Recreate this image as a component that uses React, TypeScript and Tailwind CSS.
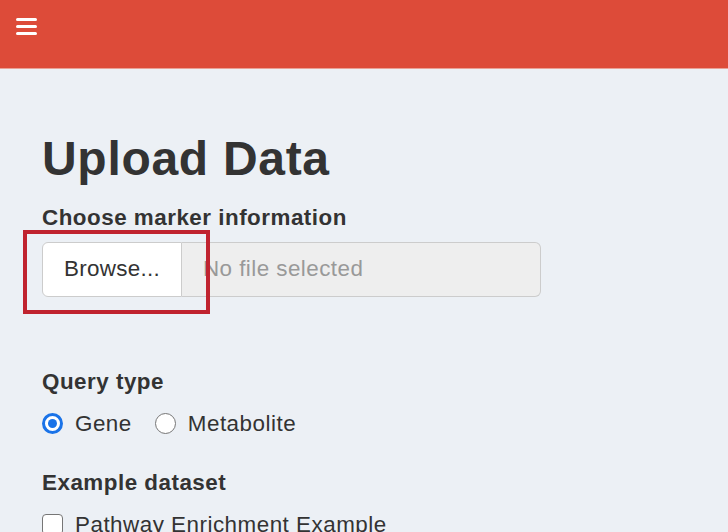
const sans = "font-['Liberation_Sans',Arial,sans-serif]";

function Radio({ checked, label }: { checked?: boolean; label: string }) {
  return (
    <label className="flex items-center gap-3">
      {checked ? (
        <span className="flex h-[21px] w-[21px] items-center justify-center rounded-full border-[3px] border-[#1a73e8] bg-white">
          <span className="h-[9px] w-[9px] rounded-full bg-[#1a73e8]" />
        </span>
      ) : (
        <span className="h-[21px] w-[21px] rounded-full border-[1.5px] border-[#767676] bg-white" />
      )}
      <span>{label}</span>
    </label>
  );
}

export default function App() {
  return (
    <div className={`min-h-[532px] bg-[#ecf0f5] text-[#333] ${sans}`}>
      <header className="flex h-[69px] items-start border-b border-[#e9a196] bg-[#dd4b39] pl-4 pt-[18px]">
        <div className="flex w-[21px] flex-col gap-1">
          <span className="h-[3px] rounded-sm bg-white" />
          <span className="h-[3px] rounded-sm bg-white" />
          <span className="h-[3px] rounded-sm bg-white" />
        </div>
      </header>

      <main className="px-[42px] pt-[64px] text-[22.4px] leading-[32px] tracking-[0.5px]">
        <h1 className="text-[48px] font-bold leading-[1.1] tracking-[0.7px]">Upload Data</h1>

        <div className="mt-[16px] font-bold">Choose marker information</div>
        <div className="relative mt-[8px] flex h-[55px] w-[499px]">
          <div className="flex w-[140px] items-center justify-center rounded-l-md border border-[#ccc] bg-white tracking-[0.3px]">
            Browse...
          </div>
          <div className="flex flex-1 items-center rounded-r-md border border-l-0 border-[#ccc] bg-[#eee] pl-[21px] tracking-[0.45px] text-[#999]">
            No file selected
          </div>
          <div className="absolute left-[-19px] top-[-12px] h-[84px] w-[187px] border-4 border-[#c0232f]" />
        </div>

        <div className="mt-[69px] font-bold">Query type</div>
        <div className="mt-[10px] flex items-center gap-[23px]">
          <Radio checked label="Gene" />
          <Radio label="Metabolite" />
        </div>

        <div className="mt-[27px] font-bold">Example dataset</div>
        <label className="mt-[10px] flex items-center gap-3">
          <span className="h-[21px] w-[21px] rounded-[4px] border-[1.5px] border-[#767676] bg-white" />
          <span>Pathway Enrichment Example</span>
        </label>
      </main>
    </div>
  );
}
